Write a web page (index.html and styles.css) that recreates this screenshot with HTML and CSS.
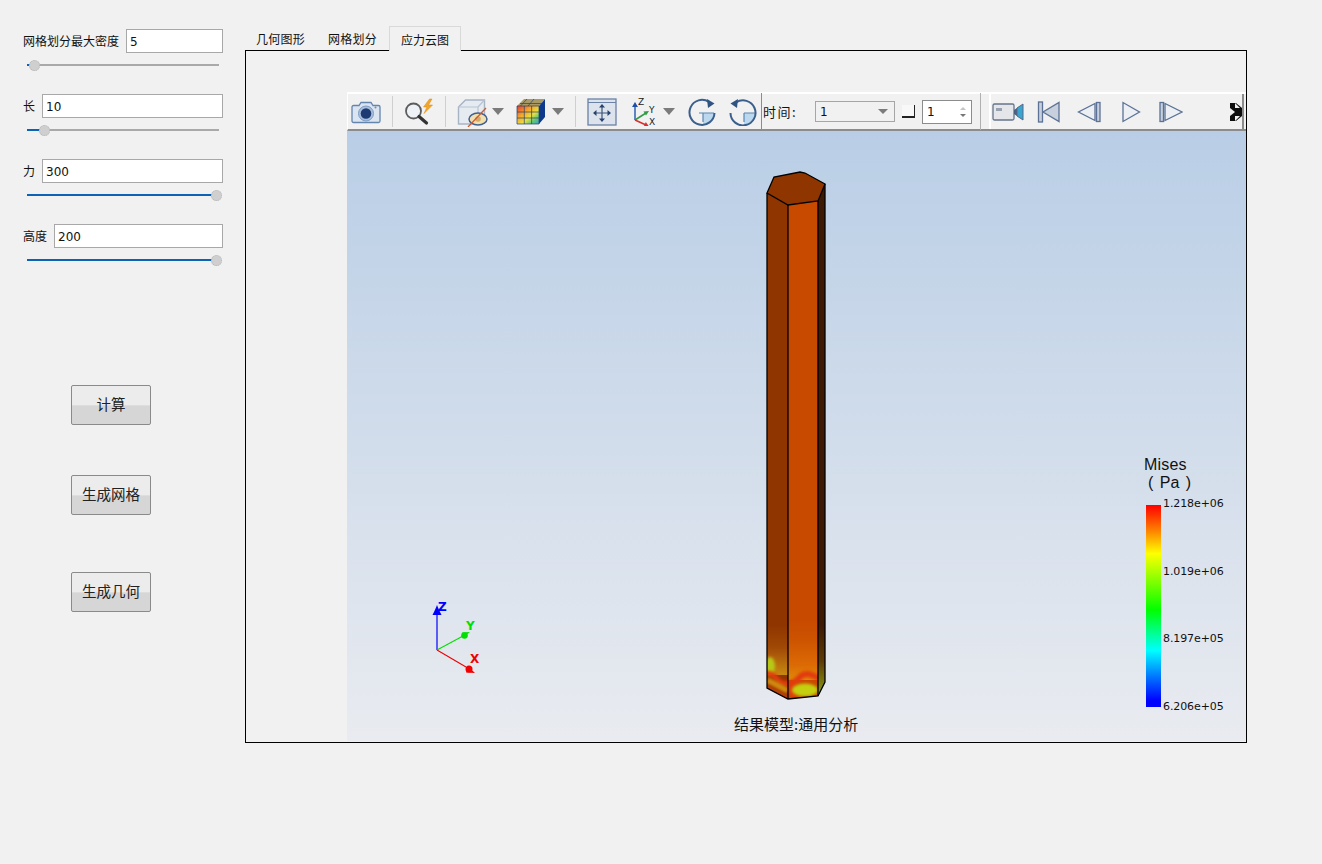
FILE: index.html
```html
<!DOCTYPE html>
<html lang="zh">
<head>
<meta charset="utf-8">
<title>应力云图</title>
<link rel="stylesheet" href="styles.css">
</head>
<body>
<div class="app">
  <aside class="side">
    <div class="group">
      <div class="field"><label>网格划分最大密度</label><div class="input">5</div></div>
      <div class="slider"><div class="fill" style="width:7px"></div><div class="knob"></div></div>
    </div>
    <div class="group">
      <div class="field"><label>长</label><div class="input">10</div></div>
      <div class="slider"><div class="fill" style="width:17px"></div><div class="knob"></div></div>
    </div>
    <div class="group">
      <div class="field"><label>力</label><div class="input">300</div></div>
      <div class="slider"><div class="fill" style="width:189px"></div><div class="knob"></div></div>
    </div>
    <div class="group">
      <div class="field"><label>高度</label><div class="input">200</div></div>
      <div class="slider"><div class="fill" style="width:189px"></div><div class="knob"></div></div>
    </div>
    <div class="buttons">
      <button class="btn">计算</button>
      <button class="btn">生成网格</button>
      <button class="btn btn-last">生成几何</button>
    </div>
  </aside>

  <main class="workspace">
    <div class="tabs">
      <div class="tab">几何图形</div>
      <div class="tab">网格划分</div>
      <div class="tab active">应力云图</div>
    </div>
    <div class="pane">
      <div class="viewer">
        <div class="toolbar">
          <div class="tb-main">
            <svg class="i-cam" width="30" height="26" viewBox="0 0 30 26">
              <path d="M2.500 6.500h5.500l2-3h10l2 3h5.500a1.500 1.500 0 0 1 1.500 1.500v14a1.500 1.500 0 0 1-1.500 1.500h-25a1.500 1.500 0 0 1-1.500-1.500v-14a1.500 1.500 0 0 1 1.500-1.500z" fill="#dbe5f1" stroke="#6485ae" stroke-width="1.300"/>
              <circle cx="15" cy="14.500" r="7.500" fill="#a9bedb" stroke="#7d9bc2"/>
              <circle cx="15" cy="14.500" r="5.300" fill="#1d3a72"/>
              <circle cx="24.500" cy="8.500" r="1" fill="#6e8cb4"/>
            </svg>
            <span class="sep s-1"></span>
            <svg class="i-mag" width="32" height="28" viewBox="0 0 32 28">
              <circle cx="9.500" cy="13" r="7.500" fill="#eef2f7" stroke="#5c5c5c" stroke-width="1.800"/>
              <path d="M15 18.500L22.500 25" stroke="#333" stroke-width="3.200" stroke-linecap="round"/>
              <path d="M25.500 1l-6 8h3.500l-3 6.500 8.500-8.500h-4l3.500-6z" fill="#f2a52a" stroke="#d98a12" stroke-width=".5"/>
            </svg>
            <span class="sep s-2"></span>
            <svg class="i-cube" width="32" height="30" viewBox="0 0 32 30">
              <path d="M1.500 10l7-7h19v17l-6.500 7H1.500z" fill="#e6eaf1" stroke="#a7b4c6" stroke-width="1.400"/>
              <path d="M1.500 10h19.500v17M21 10l6.500-7" fill="none" stroke="#b8c3d2" stroke-width="1.200"/>
              <ellipse cx="21" cy="22" rx="9" ry="6" fill="#f2dfae" stroke="#3f5f8f" stroke-width="1.500"/>
              <circle cx="21" cy="22" r="2.800" fill="#d0ab6c"/>
              <path d="M11 30L29 11" stroke="#cf5a2e" stroke-width="1.300"/>
            </svg>
            <span class="arrow a-1"></span>
            <svg class="i-grid" width="30" height="28" viewBox="0 0 30 28">
              <defs>
                <linearGradient id="rainbow" x1="0" y1="0" x2="1" y2="1">
                  <stop offset="0" stop-color="#e23b34"/><stop offset=".35" stop-color="#f3a52c"/><stop offset=".6" stop-color="#e8e040"/><stop offset=".8" stop-color="#5cc878"/><stop offset="1" stop-color="#3a9ae0"/>
                </linearGradient>
              </defs>
              <path d="M8 1h21l-6 7H1z" fill="#a89a66"/>
              <path d="M23 8l6-7v18l-6 7z" fill="#0e3a8c"/>
              <rect x="1" y="8" width="22" height="18" fill="url(#rainbow)"/>
              <path d="M8.300 8v18M15.600 8v18M1 14h22M1 20h22M1 8h22v18H1zM4 5.500h22M11 1L4.500 8M18 1l-6 7" fill="none" stroke="#2a3f63" stroke-width=".7"/>
            </svg>
            <span class="arrow a-2"></span>
            <span class="sep s-3"></span>
            <svg class="i-fit" width="30" height="28" viewBox="0 0 30 28">
              <rect x="1" y="1" width="28" height="26" fill="#dde3ec" stroke="#6a82a6" stroke-width="1.300"/>
              <path d="M1 4.500h28" stroke="#6a82a6"/>
              <path d="M15 8v14M8 15h14" stroke="#3d5478" stroke-width="1.200"/>
              <path d="M15 6l-3 3.500h6zM15 24l-3-3.500h6zM6 15l3.500-3v6zM24 15l-3.500-3v6z" fill="#26436e"/>
            </svg>
            <svg class="i-axes" width="30" height="28" viewBox="0 0 30 28">
              <path d="M5 22V7" stroke="#2c5fb0" stroke-width="1.500"/><path d="M5 4l-3 5h6z" fill="#1f50a8"/>
              <path d="M5 22l11-7" stroke="#2f9c46" stroke-width="1.500"/><path d="M19 13l-5.500.5 2.500 4z" fill="#2f9c46"/>
              <path d="M5 22l11 5" stroke="#d62f2f" stroke-width="1.500"/><path d="M19 28.500l-5-.5 1.800-4z" fill="#d62f2f"/>
              <text x="8" y="7" class="axis-t">Z</text><text x="19" y="15" class="axis-t">Y</text><text x="19" y="27" class="axis-t">X</text>
            </svg>
            <span class="arrow a-3"></span>
            <svg class="i-rot1" width="28" height="28" viewBox="0 0 28 28">
              <path d="M15 15h11.500a12.500 12.500 0 0 1-11.500 12z" fill="#bcd8ee"/>
              <path d="M15 15v9M11 15h15" stroke="#5b86b4" stroke-width="1.200"/>
              <path d="M21 4A12.500 12.500 0 1 0 26.500 15" fill="none" stroke="#3b5f8c" stroke-width="2"/>
              <path d="M19 1l7.500 4.500-6.500 4.500z" fill="#2f5482"/>
            </svg>
            <svg class="i-rot2" width="28" height="28" viewBox="0 0 28 28">
              <path d="M15 15h11.500a12.500 12.500 0 0 1-11.500 12z" fill="#bcd8ee"/>
              <path d="M15 15v9M15 15h12" stroke="#5b86b4" stroke-width="1.200"/>
              <path d="M7 4.500A12.500 12.500 0 1 1 1.500 15" fill="none" stroke="#3b5f8c" stroke-width="2"/>
              <path d="M9 1L1.500 5.500l6.500 4.500z" fill="#2f5482"/>
            </svg>
            <span class="vline v-1"></span>
            <span class="time-label">时间:</span>
            <div class="combo"><span>1</span><i class="combo-arrow"></i></div>
            <span class="check"></span>
            <div class="spin"><span>1</span><span class="spin-arrows"><i class="up"></i><i class="down"></i></span></div>
            <span class="vline v-2"></span>
          </div>
          <div class="tb-play">
            <svg class="i-rec" width="32" height="20" viewBox="0 0 32 20">
              <rect x="1" y="2" width="21" height="16" rx="1.500" fill="#e4e6ea" stroke="#66758c" stroke-width="1.300"/>
              <rect x="4" y="6" width="6" height="3" fill="#98a2b0"/>
              <path d="M22 8l3-2v8l-3-2z" fill="#4e6080"/>
              <path d="M25 6l6-4v16l-6-4z" fill="#3aa6cf" stroke="#56688a"/>
            </svg>
            <svg class="i-first" width="24" height="22" viewBox="0 0 24 22">
              <rect x="1.500" y="1" width="4" height="20" fill="#c7d0dc" stroke="#5b7296" stroke-width="1.300"/>
              <path d="M22 1.500v19L6 11z" fill="#c7d0dc" stroke="#5b7296" stroke-width="1.300"/>
            </svg>
            <svg class="i-prev" width="24" height="22" viewBox="0 0 24 22">
              <path d="M18 2.500v17L1.500 11z" fill="#eceff3" stroke="#5b7296" stroke-width="1.300"/>
              <rect x="19.500" y="1.500" width="3.500" height="19" fill="#c7d0dc" stroke="#5b7296" stroke-width="1.300"/>
            </svg>
            <svg class="i-play" width="20" height="22" viewBox="0 0 20 22">
              <path d="M2 1.500v19L18.500 11z" fill="#eceff3" stroke="#5b7296" stroke-width="1.300"/>
            </svg>
            <svg class="i-next" width="24" height="22" viewBox="0 0 24 22">
              <rect x="1" y="1.500" width="3.500" height="19" fill="#c7d0dc" stroke="#5b7296" stroke-width="1.300"/>
              <path d="M6 2.500v17L23 11z" fill="#eceff3" stroke="#5b7296" stroke-width="1.300"/>
            </svg>
            <svg class="i-more" width="12" height="18" viewBox="0 0 12 18">
              <defs><filter id="soft"><feGaussianBlur stdDeviation=".6"/></filter></defs>
              <g filter="url(#soft)">
                <path d="M0 0h6l6 5v8l-6 5H0z" fill="#111"/>
                <path d="M0 5l5 4-5 4zM5 0l5 5H5zM5 18l5-5H5z" fill="#f0f0f0"/>
              </g>
            </svg>
          </div>
        </div>

        <div class="scene">
          <svg class="scene-svg" width="899" height="610" viewBox="347 131 899 610">
            <defs>
              <clipPath id="left-face"><path d="M767 193L788 205V699L767 688Z"/></clipPath>
              <clipPath id="mid-face"><path d="M788 205L818 201V696L788 699Z"/></clipPath>
              <clipPath id="right-face"><path d="M818 201L825 184V682L818 696Z"/></clipPath>
              <linearGradient id="mid-fade" x1="0" y1="0" x2="0" y2="1">
                <stop offset="0" stop-color="#c84a00"/><stop offset=".3" stop-color="#cc5200"/><stop offset=".75" stop-color="#dc6a04"/><stop offset="1" stop-color="#e08a08"/>
              </linearGradient>
              <linearGradient id="left-fade" x1="0" y1="0" x2="0" y2="1">
                <stop offset="0" stop-color="#8f3500"/><stop offset=".45" stop-color="#a04806"/><stop offset="1" stop-color="#c88a10"/>
              </linearGradient>
              <linearGradient id="right-fade" x1="0" y1="0" x2="0" y2="1">
                <stop offset="0" stop-color="#3e1a05"/><stop offset=".5" stop-color="#5e3a06"/><stop offset="1" stop-color="#90a410"/>
              </linearGradient>
              <filter id="b1" x="-40%" y="-80%" width="180%" height="260%"><feGaussianBlur stdDeviation="1.500"/></filter>
            </defs>

            <path d="M767 193L788 205V699L767 688Z" fill="#8f3500"/>
            <g clip-path="url(#left-face)">
              <rect x="767" y="625" width="21" height="50" fill="url(#left-fade)"/>
              <ellipse cx="770" cy="666" rx="5" ry="9" fill="#b8c814" filter="url(#b1)"/>
              <path d="M763 674Q772 672 776 678T790 684" fill="none" stroke="#e23a08" stroke-width="5" filter="url(#b1)"/>
              <path d="M767 680L788 691" stroke="#d08a0c" stroke-width="6" filter="url(#b1)"/>
              <path d="M767 687L788 698" stroke="#c04008" stroke-width="4" filter="url(#b1)"/>
            </g>

            <path d="M788 205L818 201V696L788 699Z" fill="#c84a00"/>
            <g clip-path="url(#mid-face)">
              <rect x="788" y="620" width="30" height="60" fill="url(#mid-fade)"/>
              <path d="M786 684Q794 684 800 677T820 679" fill="none" stroke="#e23a0a" stroke-width="6" filter="url(#b1)"/>
              <path d="M790 684L794 700" stroke="#e23a0a" stroke-width="5" filter="url(#b1)"/>
              <ellipse cx="805" cy="690" rx="13" ry="6.500" fill="#c4d010" filter="url(#b1)"/>
              <path d="M796 698H818" stroke="#d8a010" stroke-width="3" filter="url(#b1)"/>
            </g>

            <path d="M818 201L825 184V682L818 696Z" fill="#3e1a05"/>
            <g clip-path="url(#right-face)">
              <rect x="818" y="625" width="8" height="72" fill="url(#right-fade)"/>
            </g>

            <path d="M767 193L774 177L800 172L805 173L825 184L818 201L788 205Z" fill="#8f3500"/>
            <g fill="none" stroke="#000" stroke-width="1.300">
              <path d="M767 193L774 177L800 172L805 173L825 184L818 201L788 205Z"/>
              <path d="M767 193V688L788 699L818 696L825 682V184"/>
              <path d="M788 205V699M818 201V696"/>
            </g>

            <path d="M437 650V612" stroke="#0000ff" stroke-width="1.200"/>
            <path d="M437 605q1 3 4.500 10h-9q3.500-7 4.500-10z" fill="#0000ff"/>
            <path d="M437 650L463 636" stroke="#00e000" stroke-width="1.100"/>
            <circle cx="464.500" cy="635.500" r="3.300" fill="#00e000"/>
            <path d="M470 632l-8 .500 1 5z" fill="#00e000"/>
            <path d="M437 650L466 667" stroke="#f00000" stroke-width="1.100"/>
            <circle cx="469" cy="669" r="3.500" fill="#f00000"/>
            <path d="M475 673l-9-.5 2-6z" fill="#f00000"/>
            <text x="438" y="611" class="t-z">Z</text>
            <text x="466" y="630" class="t-y">Y</text>
            <text x="470" y="663" class="t-x">X</text>
          </svg>

          <div class="legend">
            <div class="legend-title">Mises</div>
            <div class="legend-unit">( Pa )</div>
            <div class="legend-body">
              <div class="legend-bar"></div>
              <div class="legend-ticks">
                <span>1.218e+06</span><span>1.019e+06</span><span>8.197e+05</span><span>6.206e+05</span>
              </div>
            </div>
          </div>
          <div class="caption">结果模型:通用分析</div>
        </div>
      </div>
    </div>
  </main>
</div>
</body>
</html>
```

FILE: styles.css
```css
* { box-sizing: border-box; }
html, body { margin: 0; padding: 0; }
body {
  width: 1322px;
  height: 864px;
  overflow: hidden;
  background: #f1f1f1;
  font-family: "Noto Sans CJK SC", "Noto Sans", sans-serif;
  font-size: 12px;
  color: #111;
}
.app { display: flex; height: 864px; }

/* left column */
.side { width: 245px; flex: none; padding: 29px 23px 0 23px; }
.group { height: 65px; }
.field { display: flex; align-items: center; height: 24px; width: 200px; gap: 7px; }
.field label { white-space: nowrap; font-size: 12px; line-height: 16px; flex: none; }
.input {
  flex: 1;
  height: 24px;
  background: #fff;
  border: 1px solid #a8a8a8;
  padding-left: 3px;
  font: 12px/24px "DejaVu Sans", sans-serif;
  color: #111;
}
.slider {
  position: relative;
  width: 192px;
  height: 2px;
  margin: 11px 0 0 4px;
  background: #a9a9a9;
}
.fill { height: 2px; background: #0b63b6; }
.knob {
  position: absolute;
  top: -4px;
  width: 11px;
  height: 11px;
  border-radius: 50%;
  background: #cfcfcf;
  border: 1px dotted #b5b5b5;
}
.group:nth-child(1) .knob { left: 2px; }
.group:nth-child(2) .knob { left: 12px; }
.group:nth-child(3) .knob, .group:nth-child(4) .knob { left: 184px; }

.buttons { display: flex; flex-direction: column; align-items: flex-start; margin: 96px 0 0 48px; }
.btn {
  width: 80px;
  height: 40px;
  margin-bottom: 50px;
  padding: 0 0 3px;
  border: 1px solid #8a8a8a;
  border-radius: 2px;
  background: linear-gradient(#ececec 0, #ececec 50%, #d6d6d6 52%, #d6d6d6 100%);
  font: 14.500px "Noto Sans CJK SC", sans-serif;
  color: #222;
}
.btn:nth-child(2) { margin-bottom: 57px; }
.btn-last { margin-bottom: 0; }

/* tab area */
.workspace { width: 1002px; flex: none; padding-top: 26px; }
.tabs { display: flex; height: 24px; padding-left: 1px; position: relative; z-index: 1; }
.tab {
  padding: 0 10px;
  line-height: 25px;
  font-size: 12px;
  letter-spacing: .25px;
  height: 24px;
  margin-right: 3px;
}
.tab.active {
  height: 25px;
  padding: 0 11px;
  margin-left: -1px;
  letter-spacing: 0;
  border: 1px solid #d9d9d9;
  border-bottom: 0;
  background: #f1f1f1;
}
.pane {
  height: 693px;
  border: 1px solid #000;
  padding: 41px 0 0 101px;
  background: #f1f1f1;
}
.viewer { height: 649px; width: 899px; display: flex; flex-direction: column; }

/* toolbar */
.toolbar {
  display: flex;
  height: 39px;
  flex: none;
  background: #f1f1f1;
  border-top: 2px solid #fff;
  border-left: 1px solid #fff;
  border-bottom: 2px solid #8c8c8c;
}
.tb-main { display: flex; align-items: center; width: 641px; flex: none; }
.tb-play {
  display: flex;
  align-items: center;
  width: 255px;
  flex: none;
  border-left: 2px solid #fff;
  border-right: 2px solid #8c8c8c;
}
.toolbar svg { flex: none; display: block; }
.sep { width: 1px; height: 31px; background: #cfcfcf; flex: none; }
.arrow {
  flex: none;
  width: 0; height: 0;
  border-left: 6px solid transparent;
  border-right: 6px solid transparent;
  border-top: 7px solid #7b7b7b;
}
.i-cam { margin-left: 3px; }
.s-1 { margin-left: 11px; }
.i-mag { margin-left: 11px; }
.s-2 { margin-left: 9px; }
.i-cube { margin-left: 11px; }
.a-1 { margin-left: 3px; }
.i-grid { margin-left: 12px; }
.a-2 { margin-left: 6px; }
.s-3 { margin-left: 11px; }
.i-fit { margin-left: 11px; }
.i-axes { margin-left: 13px; }
.a-3 { margin-left: 3px; }
.i-rot1 { margin-left: 13px; }
.i-rot2 { margin-left: 13px; }
.vline { width: 1px; height: 37px; background: #8c8c8c; flex: none; }
.v-1 { margin-left: 4px; }
.time-label { margin-left: 1px; width: 52px; flex: none; font-size: 13px; letter-spacing: 1.500px; }
.combo {
  display: flex;
  align-items: center;
  justify-content: space-between;
  width: 80px;
  height: 21px;
  flex: none;
  padding: 0 6px 0 4px;
  border: 1px solid #a6a6a6;
  font: 12px "DejaVu Sans", sans-serif;
}
.combo-arrow {
  width: 0; height: 0;
  border-left: 5px solid transparent;
  border-right: 5px solid transparent;
  border-top: 5px solid #7b7b7b;
}
.check {
  width: 13px;
  height: 13px;
  margin-left: 7px;
  flex: none;
  background: #f8f8f8;
  border-right: 1px solid #222;
  border-bottom: 2px solid #222;
}
.spin {
  display: flex;
  align-items: center;
  justify-content: space-between;
  width: 50px;
  height: 24px;
  margin-left: 7px;
  flex: none;
  padding: 0 5px 0 4px;
  background: #fff;
  border: 1px solid #8c8c8c;
  font: 12px "DejaVu Sans", sans-serif;
}
.spin-arrows { display: flex; flex-direction: column; gap: 4px; }
.spin-arrows i { display: block; width: 0; height: 0; border-left: 3px solid transparent; border-right: 3px solid transparent; }
.spin-arrows .up { border-bottom: 3px solid #c4c4c4; }
.spin-arrows .down { border-top: 3px solid #777; }
.v-2 { margin-left: 8px; background: #b0b0b0; }

.i-rec { margin-left: 1px; }
.i-first { margin-left: 13px; }
.i-prev { margin-left: 16px; }
.i-play { margin-left: 20px; }
.i-next { margin-left: 18px; }
.i-more { margin-left: 47px; }
.axis-t { font: 9px "DejaVu Sans", sans-serif; fill: #222; }

/* 3D view */
.scene {
  position: relative;
  width: 899px;
  height: 610px;
  background: linear-gradient(#b9cee6, #e9ebf0);
}
.scene-svg { position: absolute; left: 0; top: 0; display: block; }
.t-z, .t-y, .t-x { font: bold 12px "DejaVu Sans", sans-serif; }
.t-z { fill: #0000ff; }
.t-y { fill: #00e000; }
.t-x { fill: #f00000; }

.legend { position: absolute; left: 797px; top: 325px; width: 90px; color: #111; }
.legend-title { font: 16px/18px "Liberation Sans", sans-serif; letter-spacing: .2px; }
.legend-unit { font: 16px/18px "Liberation Sans", sans-serif; padding-left: 4px; word-spacing: 2px; }
.legend-body { display: flex; margin-top: 13px; height: 202px; }
.legend-bar {
  width: 15px;
  margin-left: 2px;
  background: linear-gradient(#ff0000 0, #ff7a00 12%, #ffff00 24%, #00ff00 52%, #00ffff 72%, #0080ff 84%, #0000ff 97%, #0000ff 100%);
}
.legend-ticks {
  display: flex;
  flex-direction: column;
  justify-content: space-between;
  height: 217px;
  margin: -8px 0 0 2px;
  font: 11px/14px "DejaVu Sans", sans-serif;
  letter-spacing: -.1px;
  white-space: nowrap;
}
.caption {
  position: absolute;
  left: 387px;
  top: 584px;
  font-size: 15px;
  line-height: 18px;
  color: #111;
  white-space: nowrap;
}
```
